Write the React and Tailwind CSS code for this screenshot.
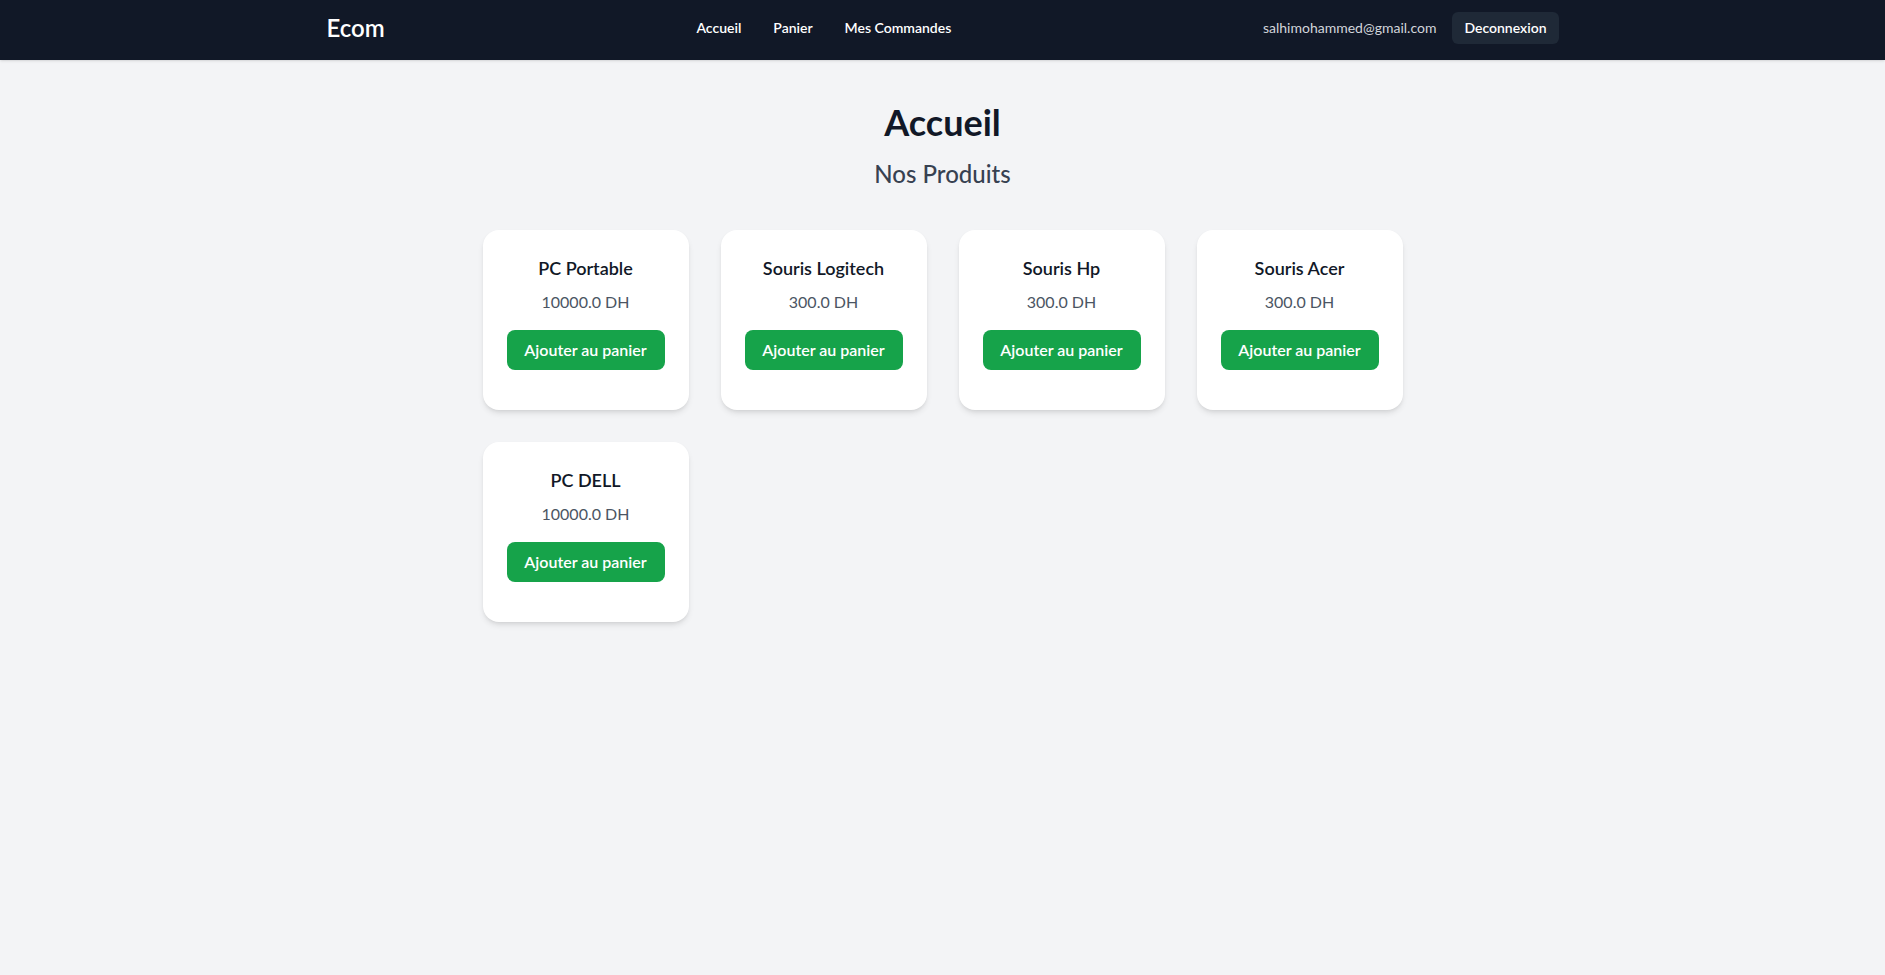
import React from 'react';

const produits = [
  { id: 1, nom: "PC Portable", prix: "10000.0" },
  { id: 2, nom: "Souris Logitech", prix: "300.0" },
  { id: 3, nom: "Souris Hp", prix: "300.0" },
  { id: 4, nom: "Souris Acer", prix: "300.0" },
  { id: 5, nom: "PC DELL", prix: "10000.0" },
];

function Navbar() {
  return (
    <nav className="bg-[#111827] h-15 shadow">
      <div className="max-w-7xl mx-auto px-6 pt-3 flex items-center justify-between">
        <span className="text-2xl font-semibold text-white">Ecom</span>
        <div className="flex gap-8 text-sm font-semibold text-white">
          <a href="#">Accueil</a>
          <a href="#">Panier</a>
          <a href="#">Mes Commandes</a>
        </div>
        <div className="flex items-center gap-4">
          <span className="text-sm text-[#d1d5db]">salhimohammed@gmail.com</span>
          <button type="button" className="bg-[#1f2937] rounded-md px-3 py-1.5 text-sm font-semibold text-white">
            Deconnexion
          </button>
        </div>
      </div>
    </nav>
  );
}

function ProductCard({ produit }) {
  return (
    <div className="bg-white rounded-2xl shadow-md px-6 pt-6 pb-10 flex flex-col items-center text-center">
      <h3 className="text-lg font-semibold text-[#111827] mb-2">{produit.nom}</h3>
      <p className="text-base text-[#4b5563]">{produit.prix} DH</p>
      <button type="button" className="mt-4 w-full bg-[#16a34a] hover:bg-[#15803d] rounded-lg py-2 text-base font-semibold text-white">
        Ajouter au panier
      </button>
    </div>
  );
}

export default function App() {
  return (
    <div className="min-h-screen bg-[#f3f4f6] font-['Lato',sans-serif]">
      <Navbar />
      <main className="pt-[42px]">
        <h1 className="text-4xl font-bold text-[#111827] text-center mb-4">Accueil</h1>
        <h2 className="text-2xl font-medium text-[#374151] text-center mb-10">Nos Produits</h2>
        <div className="w-[920px] mx-auto grid grid-cols-4 gap-8">
          {produits.map(p => (
            <ProductCard key={p.id} produit={p} />
          ))}
        </div>
      </main>
    </div>
  );
}
